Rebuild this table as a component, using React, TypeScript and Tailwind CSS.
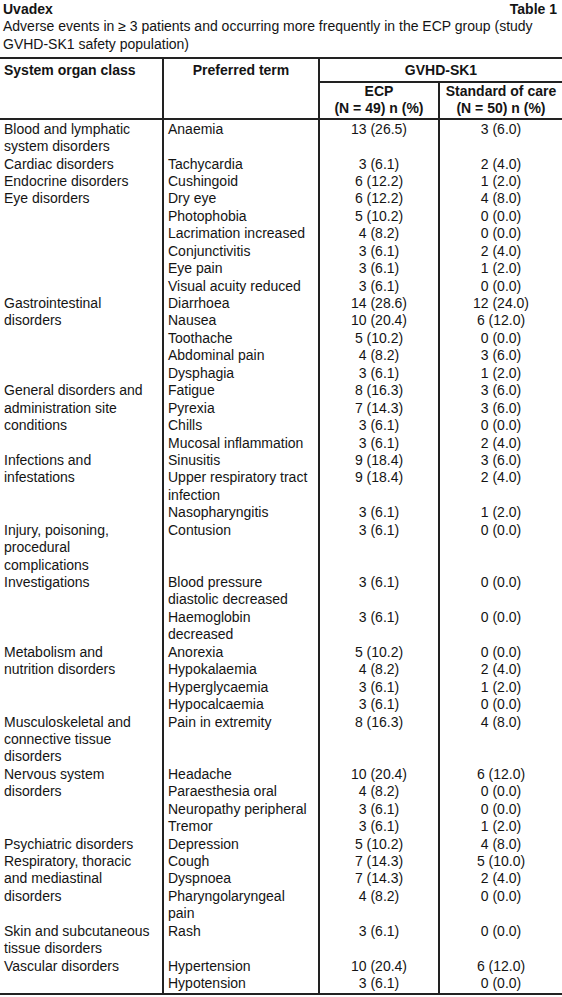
import React from "react";

type Row = { term: string[]; ecp: string; soc: string };
type Group = { organ: string[]; rows: Row[] };

const r = (term: string[], ecp: string, soc: string): Row => ({ term, ecp, soc });

const groups: Group[] = [
  { organ: ["Blood and lymphatic", "system disorders"], rows: [r(["Anaemia"], "13 (26.5)", "3 (6.0)")] },
  { organ: ["Cardiac disorders"], rows: [r(["Tachycardia"], "3 (6.1)", "2 (4.0)")] },
  { organ: ["Endocrine disorders"], rows: [r(["Cushingoid"], "6 (12.2)", "1 (2.0)")] },
  {
    organ: ["Eye disorders"],
    rows: [
      r(["Dry eye"], "6 (12.2)", "4 (8.0)"),
      r(["Photophobia"], "5 (10.2)", "0 (0.0)"),
      r(["Lacrimation increased"], "4 (8.2)", "0 (0.0)"),
      r(["Conjunctivitis"], "3 (6.1)", "2 (4.0)"),
      r(["Eye pain"], "3 (6.1)", "1 (2.0)"),
      r(["Visual acuity reduced"], "3 (6.1)", "0 (0.0)"),
    ],
  },
  {
    organ: ["Gastrointestinal", "disorders"],
    rows: [
      r(["Diarrhoea"], "14 (28.6)", "12 (24.0)"),
      r(["Nausea"], "10 (20.4)", "6 (12.0)"),
      r(["Toothache"], "5 (10.2)", "0 (0.0)"),
      r(["Abdominal pain"], "4 (8.2)", "3 (6.0)"),
      r(["Dysphagia"], "3 (6.1)", "1 (2.0)"),
    ],
  },
  {
    organ: ["General disorders and", "administration site", "conditions"],
    rows: [
      r(["Fatigue"], "8 (16.3)", "3 (6.0)"),
      r(["Pyrexia"], "7 (14.3)", "3 (6.0)"),
      r(["Chills"], "3 (6.1)", "0 (0.0)"),
      r(["Mucosal inflammation"], "3 (6.1)", "2 (4.0)"),
    ],
  },
  {
    organ: ["Infections and", "infestations"],
    rows: [
      r(["Sinusitis"], "9 (18.4)", "3 (6.0)"),
      r(["Upper respiratory tract", "infection"], "9 (18.4)", "2 (4.0)"),
      r(["Nasopharyngitis"], "3 (6.1)", "1 (2.0)"),
    ],
  },
  { organ: ["Injury, poisoning,", "procedural", "complications"], rows: [r(["Contusion"], "3 (6.1)", "0 (0.0)")] },
  {
    organ: ["Investigations"],
    rows: [
      r(["Blood pressure", "diastolic decreased"], "3 (6.1)", "0 (0.0)"),
      r(["Haemoglobin", "decreased"], "3 (6.1)", "0 (0.0)"),
    ],
  },
  {
    organ: ["Metabolism and", "nutrition disorders"],
    rows: [
      r(["Anorexia"], "5 (10.2)", "0 (0.0)"),
      r(["Hypokalaemia"], "4 (8.2)", "2 (4.0)"),
      r(["Hyperglycaemia"], "3 (6.1)", "1 (2.0)"),
      r(["Hypocalcaemia"], "3 (6.1)", "0 (0.0)"),
    ],
  },
  {
    organ: ["Musculoskeletal and", "connective tissue", "disorders"],
    rows: [r(["Pain in extremity"], "8 (16.3)", "4 (8.0)")],
  },
  {
    organ: ["Nervous system", "disorders"],
    rows: [
      r(["Headache"], "10 (20.4)", "6 (12.0)"),
      r(["Paraesthesia oral"], "4 (8.2)", "0 (0.0)"),
      r(["Neuropathy peripheral"], "3 (6.1)", "0 (0.0)"),
      r(["Tremor"], "3 (6.1)", "1 (2.0)"),
    ],
  },
  { organ: ["Psychiatric disorders"], rows: [r(["Depression"], "5 (10.2)", "4 (8.0)")] },
  {
    organ: ["Respiratory, thoracic", "and mediastinal", "disorders"],
    rows: [
      r(["Cough"], "7 (14.3)", "5 (10.0)"),
      r(["Dyspnoea"], "7 (14.3)", "2 (4.0)"),
      r(["Pharyngolaryngeal", "pain"], "4 (8.2)", "0 (0.0)"),
    ],
  },
  { organ: ["Skin and subcutaneous", "tissue disorders"], rows: [r(["Rash"], "3 (6.1)", "0 (0.0)")] },
  {
    organ: ["Vascular disorders"],
    rows: [r(["Hypertension"], "10 (20.4)", "6 (12.0)"), r(["Hypotension"], "3 (6.1)", "0 (0.0)")],
  },
];

function Lines({ lines }: { lines: string[] }) {
  return (
    <>
      {lines.map((l, i) => (
        <div key={i} className="whitespace-nowrap">
          {l}
        </div>
      ))}
    </>
  );
}

export default function App() {
  return (
    <div className="w-[562px] bg-white text-[#141414] font-['Liberation_Sans',Arial,sans-serif] text-[14px] leading-[17.43px]">
      <div className="pt-[1px] pl-[3px] pr-[5px]">
        <div className="flex justify-between font-bold">
          <span>Uvadex</span>
          <span>Table 1</span>
        </div>
        <div className="whitespace-nowrap">Adverse events in ≥ 3 patients and occurring more frequently in the ECP group (study</div>
        <div>GVHD-SK1 safety population)</div>
      </div>

      <div className="mt-[4px] border-t-2 border-b-2 border-[#222]">
        {/* header */}
        <div className="flex border-b-2 border-[#222] font-bold">
          <div className="w-[164px] shrink-0 border-r-2 border-[#222] pl-[4px] pt-[3px]">System organ class</div>
          <div className="w-[156px] shrink-0 border-r-2 border-[#222] pt-[3px] text-center">Preferred term</div>
          <div className="w-[242px] shrink-0">
            <div className="border-b-2 border-[#222] pt-[3px] pb-[1px] text-center">GVHD-SK1</div>
            <div className="flex">
              <div className="w-[120px] shrink-0 border-r-2 border-[#222] text-center">
                <div>ECP</div>
                <div>(N = 49) n (%)</div>
              </div>
              <div className="w-[122px] shrink-0 text-center">
                <div>Standard of care</div>
                <div>(N = 50) n (%)</div>
              </div>
            </div>
          </div>
        </div>

        {/* body */}
        {groups.map((g, gi) => (
          <div key={gi} className="flex">
            <div className={`w-[164px] shrink-0 border-r-2 border-[#222] pl-[4px] ${gi === 0 ? "pt-[1px]" : ""}`}>
              <Lines lines={g.organ} />
            </div>
            <div className="flex w-[398px] shrink-0 flex-col">
              {g.rows.map((row, ri) => {
                const first = gi === 0 && ri === 0;
                return (
                  <div key={ri} className="flex grow">
                    <div className={`w-[156px] shrink-0 border-r-2 border-[#222] pl-[4px] ${first ? "pt-[1px]" : ""}`}>
                      <Lines lines={row.term} />
                    </div>
                    <div className={`w-[120px] shrink-0 border-r-2 border-[#222] text-center ${first ? "pt-[1px]" : ""}`}>
                      {row.ecp}
                    </div>
                    <div className={`w-[122px] shrink-0 text-center ${first ? "pt-[1px]" : ""}`}>{row.soc}</div>
                  </div>
                );
              })}
            </div>
          </div>
        ))}
      </div>
    </div>
  );
}
